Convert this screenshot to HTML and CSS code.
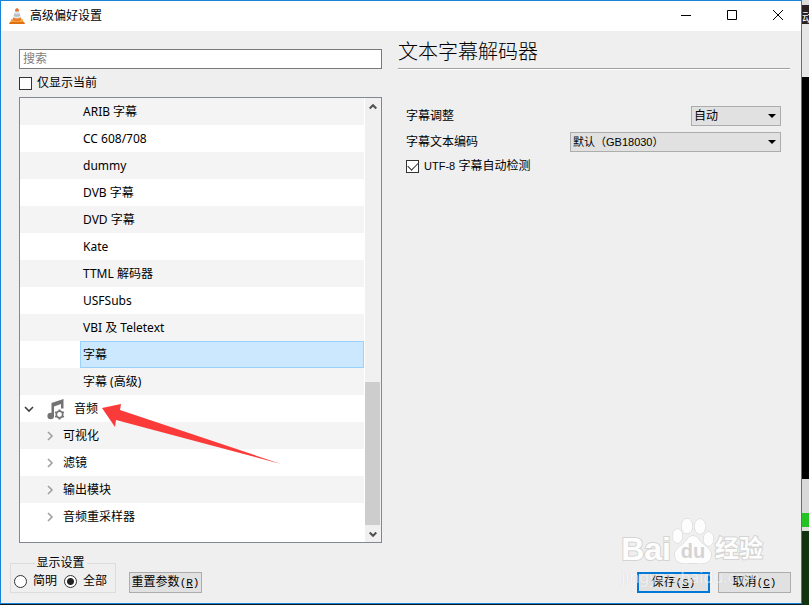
FILE: index.html
```html
<!DOCTYPE html>
<html lang="zh-CN">
<head>
    <meta charset="UTF-8">
    <meta name="viewport" content="width=device-width, initial-scale=1.0">
    <title>高级偏好设置</title>
    <link rel="stylesheet" href="styles.css">
</head>
<body>
    <div class="window">
        <header class="titlebar">
            <svg class="cone" viewBox="0 0 16 18" width="16" height="18" aria-hidden="true">
                <path d="M2.500 12h11l2 5H.500z" fill="#f9a03a"/>
                <path d="M1 15h14l1 2H0z" fill="#e07010"/>
                <path d="M6.500 2Q8 .500 9.500 2L12.500 13Q8 15.500 3.500 13z" fill="#dfe3e6"/>
                <path d="M6.500 2Q8 .500 9.500 2L10 4Q8 5 6 4z" fill="#e8702a"/>
                <path d="M5.300 6.500Q8 8 10.700 6.500L11.300 9Q8 10.500 4.700 9z" fill="#b9bfc4"/>
                <path d="M4.200 10.500Q8 12.500 11.800 10.500L12.500 13Q8 15.500 3.500 13z" fill="#ee7c22"/>
            </svg>
            <h1>高级偏好设置</h1>
            <button class="win-btn" aria-label="最小化">
                <svg width="10" height="10" viewBox="0 0 10 10"><path d="M0 5.500h10" stroke="#000"/></svg>
            </button>
            <button class="win-btn" aria-label="最大化">
                <svg width="10" height="10" viewBox="0 0 10 10"><path d="M.500 .500h9v9h-9z" fill="none" stroke="#000"/></svg>
            </button>
            <button class="win-btn" aria-label="关闭">
                <svg width="10" height="10" viewBox="0 0 10 10"><path d="M0 0l10 10M10 0L0 10" stroke="#000"/></svg>
            </button>
        </header>

        <main class="content">
            <section class="sidebar">
                <input type="text" class="search" placeholder="搜索" aria-label="搜索">
                <label class="check current"><input type="checkbox">仅显示当前</label>
                <div class="tree-box">
                    <ul class="tree">
                        <li class="leaf"><span>ARIB 字幕</span></li>
                        <li class="leaf"><span>CC 608/708</span></li>
                        <li class="leaf"><span>dummy</span></li>
                        <li class="leaf"><span>DVB 字幕</span></li>
                        <li class="leaf"><span>DVD 字幕</span></li>
                        <li class="leaf"><span>Kate</span></li>
                        <li class="leaf"><span>TTML 解码器</span></li>
                        <li class="leaf"><span>USFSubs</span></li>
                        <li class="leaf"><span>VBI 及 Teletext</span></li>
                        <li class="leaf selected"><span>字幕</span></li>
                        <li class="leaf"><span>字幕 (高级)</span></li>
                        <li class="group">
                            <svg class="chevron" width="10" height="10" viewBox="0 0 10 10"><path d="M1 3l4 4 4-4" fill="none" stroke="#404040" stroke-width="1.600"/></svg>
                            <svg class="note" width="18" height="22" viewBox="0 0 18 22">
                                <path d="M4.500 5L16.500 1v9.500h-2.500V6L7 8.500V18H4.500z" fill="#737373"/>
                                <circle cx="3.700" cy="18" r="3.300" fill="#737373"/>
                                <circle cx="12.500" cy="16.500" r="3.200" fill="none" stroke="#737373" stroke-width="1.600"/>
                                <path d="M12.500 11.500v2M12.500 19.500v2M8.200 14l1.700 1M15.100 18l1.700 1M8.200 19l1.700-1M15.100 15l1.700-1" stroke="#737373" stroke-width="2"/>
                            </svg>
                            <span>音频</span>
                        </li>
                        <li class="sub">
                            <svg class="chevron" width="10" height="10" viewBox="0 0 10 10"><path d="M3 1l4 4-4 4" fill="none" stroke="#a0a0a0" stroke-width="1.600"/></svg>
                            <span>可视化</span>
                        </li>
                        <li class="sub">
                            <svg class="chevron" width="10" height="10" viewBox="0 0 10 10"><path d="M3 1l4 4-4 4" fill="none" stroke="#a0a0a0" stroke-width="1.600"/></svg>
                            <span>滤镜</span>
                        </li>
                        <li class="sub">
                            <svg class="chevron" width="10" height="10" viewBox="0 0 10 10"><path d="M3 1l4 4-4 4" fill="none" stroke="#a0a0a0" stroke-width="1.600"/></svg>
                            <span>输出模块</span>
                        </li>
                        <li class="sub">
                            <svg class="chevron" width="10" height="10" viewBox="0 0 10 10"><path d="M3 1l4 4-4 4" fill="none" stroke="#a0a0a0" stroke-width="1.600"/></svg>
                            <span>音频重采样器</span>
                        </li>
                    </ul>
                    <div class="scrollbar">
                        <button aria-label="向上滚动">
                            <svg width="8" height="8" viewBox="0 0 8 8"><path d="M.700 5.500L4 2.200l3.300 3.300" fill="none" stroke="#505050" stroke-width="2"/></svg>
                        </button>
                        <div class="track"><div class="thumb"></div></div>
                        <button aria-label="向下滚动">
                            <svg width="8" height="8" viewBox="0 0 8 8"><path d="M.700 2.500L4 5.800l3.300-3.300" fill="none" stroke="#505050" stroke-width="2"/></svg>
                        </button>
                    </div>
                    <svg class="pointer" width="180" height="64" viewBox="0 0 180 64" aria-hidden="true">
                        <path d="M0 6L19 2l-1 6L179 62 14 18l-1 7z" fill="#fb3a3a"/>
                    </svg>
                </div>
            </section>

            <section class="panel">
                <h2>文本字幕解码器</h2>
                <div class="options">
                    <div class="option">
                        <label for="justify">字幕调整</label>
                        <div class="select short">
                            <select id="justify"><option>自动</option></select>
                            <svg width="8" height="4" viewBox="0 0 8 4"><path d="M0 0h8L4 4z"/></svg>
                        </div>
                    </div>
                    <div class="option">
                        <label for="encoding">字幕文本编码</label>
                        <div class="select long">
                            <select id="encoding"><option>默认（GB18030）</option></select>
                            <svg width="8" height="4" viewBox="0 0 8 4"><path d="M0 0h8L4 4z"/></svg>
                        </div>
                    </div>
                    <label class="check"><input type="checkbox" checked><span><span class="latin">UTF-8</span> 字幕自动检测</span></label>
                </div>
            </section>
        </main>

        <footer class="actions">
            <fieldset>
                <legend>显示设置</legend>
                <label><input type="radio" name="mode">简明</label>
                <label><input type="radio" name="mode" checked>全部</label>
            </fieldset>
            <button class="btn">重置参数<span class="key">(<u>R</u>)</span></button>
            <button class="btn save">保存<span class="key">(<u>S</u>)</span></button>
            <button class="btn">取消<span class="key">(<u>C</u>)</span></button>
        </footer>

        <div class="watermark">
            <div class="brand">
                <span class="bai">Bai</span>
                <span class="paw">
                    <svg width="44" height="48" viewBox="0 0 42 48">
                        <g fill="#fdfdfd" stroke="#d0d0d0">
                            <ellipse cx="5.500" cy="19" rx="5" ry="7"/>
                            <ellipse cx="15" cy="9" rx="5.500" ry="7.500"/>
                            <ellipse cx="28" cy="9.500" rx="5.500" ry="7.500"/>
                            <ellipse cx="36.500" cy="22" rx="5" ry="7"/>
                            <path d="M21 19c-5 0-6 5-10 8-5 4-9 7-8 12 1 8 9 8 18 7 9 1 17 1 18-7 1-5-3-8-8-12-4-3-5-8-10-8z"/>
                        </g>
                    </svg>
                    <span class="du">du</span>
                </span>
                <span class="jy">经验</span>
            </div>
            <div class="site">jingyan.baidu.com</div>
        </div>
    </div>
    <div class="desktop" aria-hidden="true"><span>动</span></div>
</body>
</html>
```
FILE: styles.css
```css
* {
    box-sizing: border-box;
}
body {
    margin: 0;
    height: 100vh;
    display: flex;
    overflow: hidden;
    background: #101820;
    color: #000;
    font: 12px/16px "Liberation Sans", "Noto Sans CJK SC", sans-serif;
}
button, input, select {
    font: inherit;
    color: inherit;
    margin: 0;
}
.window {
    position: relative;
    flex: 1;
    display: flex;
    flex-direction: column;
    margin-bottom: 1px;
    border: 1px solid #1883d7;
    background: #efefef;
}

/* title bar */
.titlebar {
    display: flex;
    align-items: center;
    height: 30px;
    padding-left: 8px;
    background: #fff;
}
.titlebar h1 {
    flex: 1;
    margin: 0 0 0 5px;
    font-size: 12px;
    font-weight: normal;
}
.win-btn {
    width: 46px;
    height: 29px;
    padding: 0;
    border: none;
    background: none;
}

/* main area */
.content {
    flex: 1;
    min-height: 0;
    display: grid;
    grid-template-columns: 363px 1fr;
    gap: 16px;
    padding: 0 11px 0 18px;
}
.sidebar {
    display: flex;
    flex-direction: column;
    min-height: 0;
    padding-top: 18px;
}
.search {
    height: 20px;
    padding: 0 3px;
    border: 1px solid #7a7a7a;
    background: #fff;
    outline: none;
}
.search::placeholder {
    color: #808080;
}
.check {
    display: flex;
    align-items: center;
    gap: 5px;
}
.check input {
    appearance: none;
    display: grid;
    place-items: center;
    width: 13px;
    height: 13px;
    border: 1px solid #333;
    background: #fff;
}
.check input:checked::after {
    content: "";
    width: 9px;
    height: 5px;
    margin-bottom: 3px;
    border: solid #333;
    border-width: 0 0 1px 1px;
    transform: rotate(-45deg);
}
.current {
    height: 28px;
}
.tree-box {
    position: relative;
    flex: 1;
    min-height: 0;
    display: flex;
    gap: 1px;
    border: 1px solid #828790;
    background: #fff;
}
.tree {
    flex: 1;
    margin: 0;
    padding: 0;
    overflow: hidden;
    list-style: none;
    font-family: "Noto Sans", "Noto Sans CJK SC", sans-serif;
}
.tree li {
    display: flex;
    align-items: center;
    height: 27px;
}
.tree li:nth-child(odd) {
    background: #f4f4f4;
}
.leaf {
    padding-left: 60px;
}
.leaf span {
    flex: 1;
    padding: 4px 2px;
    border: 1px solid transparent;
}
.selected span {
    padding: 5px 2px 4px;
    border-color: #99d1ff;
    background: #cce8ff;
}
.group {
    padding-left: 4px;
}
.group .note {
    margin: 0 9px 0 13px;
}
.sub {
    gap: 8px;
    padding-left: 25px;
}
.scrollbar {
    display: flex;
    flex-direction: column;
    width: 16px;
    background: #f0f0f0;
}
.scrollbar button {
    height: 17px;
    padding: 0;
    border: none;
    background: none;
    line-height: 0;
}
.track {
    flex: 1;
    display: flex;
    flex-direction: column;
    justify-content: flex-end;
}
.thumb {
    width: 15px;
    height: 35%;
    background: #cdcdcd;
}
.pointer {
    position: absolute;
    left: 82px;
    top: 304px;
}

/* settings panel */
.panel h2 {
    margin: 0;
    padding: 5px 0 0;
    height: 38px;
    border-bottom: 1px solid #a0a0a0;
    box-shadow: 0 1px #fff;
    font-size: 20px;
    line-height: 32px;
    font-weight: 300;
}
.options {
    display: flex;
    flex-direction: column;
    gap: 6px;
    padding: 37px 9px 0 8px;
}
.option {
    display: flex;
    align-items: center;
    justify-content: space-between;
}
.select {
    display: grid;
    align-items: center;
}
.select select, .select svg {
    grid-area: 1 / 1;
}
.select svg {
    justify-self: end;
    margin-right: 5px;
    pointer-events: none;
}
.select select {
    appearance: none;
    height: 20px;
    padding: 0 2px;
    border: 1px solid #adadad;
    border-radius: 0;
    background: #e1e1e1;
}
.short {
    width: 90px;
}
.long {
    width: 211px;
}
.long select {
    font-size: 11px;
}
.latin {
    font-size: 11px;
}

/* bottom row */
.actions {
    display: flex;
    align-items: flex-end;
    gap: 8px;
    height: 60px;
    padding: 0 10px 10px 9px;
}
fieldset {
    display: flex;
    gap: 7px;
    margin: 0 5px 0 0;
    padding: 0 8px 1px 3px;
    border: 1px solid #dcdcdc;
}
legend {
    margin: 0 auto;
    padding: 0 2px;
}
fieldset label {
    display: flex;
    align-items: center;
    gap: 6px;
    height: 20px;
}
fieldset input {
    appearance: none;
    width: 13px;
    height: 13px;
    border: 1px solid #333;
    border-radius: 50%;
    background: #fff;
}
fieldset input:checked {
    background: radial-gradient(circle, #222 3px, #fff 4px);
}
.btn {
    width: 73px;
    height: 21px;
    padding: 0;
    border: 1px solid #adadad;
    background: #e1e1e1;
    white-space: nowrap;
}
.key {
    font-family: "Liberation Mono", monospace;
    font-size: 11px;
}
.save {
    margin-left: auto;
    border: 2px solid #0078d7;
}

/* watermark over the lower right corner */
.watermark {
    position: absolute;
    right: 38px;
    bottom: 14px;
    color: #fdfdfd;
    pointer-events: none;
    white-space: nowrap;
}
.brand {
    display: flex;
    align-items: flex-end;
    height: 48px;
    font-weight: bold;
    line-height: 32px;
    -webkit-text-stroke: 2px #d4d4d4;
    paint-order: stroke fill;
}
.bai {
    font-size: 32px;
}
.paw {
    display: grid;
    place-items: end center;
}
.paw svg, .du {
    grid-area: 1 / 1;
}
.du {
    font-size: 20px;
    line-height: 28px;
    color: #d4d4d4;
    -webkit-text-stroke: 0;
}
.jy {
    font-size: 24px;
}
.site {
    font: 16px/24px "Noto Sans", sans-serif;
    opacity: 0.5;
    text-shadow: 0 0 1px #bbb;
}

/* strip of desktop beside the window */
.desktop {
    width: 7px;
    padding-top: 10px;
    overflow: hidden;
    color: #fff;
    background: linear-gradient(#ddd 5px, #2a2022 5px 24px, #e6e6e6 24px 77px, #000 77px 479px, #d9d9d9 479px 513px, #22c322 513px 527px, #e0e0e0 527px 531px, #12330f 531px);
}
```
